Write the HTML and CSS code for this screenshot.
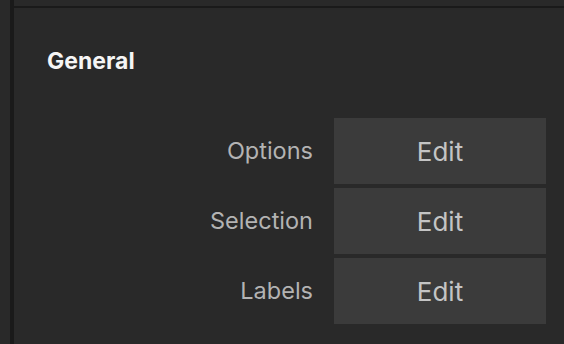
FILE: index.html
```html
<!DOCTYPE html>
<html lang="en">

<head>
    <meta charset="UTF-8">
    <meta name="viewport" content="width=device-width, initial-scale=1.0">
    <title>General Settings</title>
    <link rel="stylesheet" href="styles.css">
</head>

<body>
    <div class="frame">
        <div class="side-panel"></div>
        <div class="top-panel"></div>
        <div class="main-panel">
            <h2 class="section-title">General</h2>

            <div class="settings">
                <div class="setting-row">
                    <span class="setting-label">Options</span>
                    <button class="edit-btn">Edit</button>
                </div>
                <div class="setting-row">
                    <span class="setting-label">Selection</span>
                    <button class="edit-btn">Edit</button>
                </div>
                <div class="setting-row">
                    <span class="setting-label">Labels</span>
                    <button class="edit-btn">Edit</button>
                </div>
            </div>
        </div>
    </div>
</body>

</html>
```

FILE: styles.css
```css
:root {
    --panel-color: #292929;
    --divider-color: #1a1a1a;
    --button-color: #3b3b3b;
    --label-color: #b3b3b3;
    --button-text: #c4c4c4;
    --title-color: #f5f5f5;
}

html,
body {
    height: 100%;
}

body {
    font-family: 'Inter', 'Noto Sans', sans-serif;
    background-color: var(--divider-color);
    margin: 0;
    overflow: hidden;
}

.frame {
    display: grid;
    grid-template-columns: 10px 1fr;
    grid-template-rows: 6px 1fr;
    column-gap: 4px;
    row-gap: 2px;
    height: 100%;
}

.side-panel {
    grid-row: 1 / 3;
    background-color: var(--panel-color);
}

.top-panel {
    background-color: var(--panel-color);
}

.main-panel {
    background-color: var(--panel-color);
    padding: 39px 18px 0 33px;
}

.section-title {
    color: var(--title-color);
    font-size: 23px;
    font-weight: 700;
    line-height: 28px;
    margin: 0 0 43px;
}

.settings {
    display: flex;
    flex-direction: column;
    gap: 4px;
}

.setting-row {
    display: flex;
    justify-content: flex-end;
    align-items: center;
    gap: 21px;
}

.setting-label {
    color: var(--label-color);
    font-size: 23.5px;
    padding-bottom: 2px;
}

.edit-btn {
    width: 212px;
    height: 66px;
    background-color: var(--button-color);
    color: var(--button-text);
    border: none;
    border-radius: 0;
    font-family: inherit;
    font-size: 26px;
    padding: 0;
    cursor: pointer;
}
```
